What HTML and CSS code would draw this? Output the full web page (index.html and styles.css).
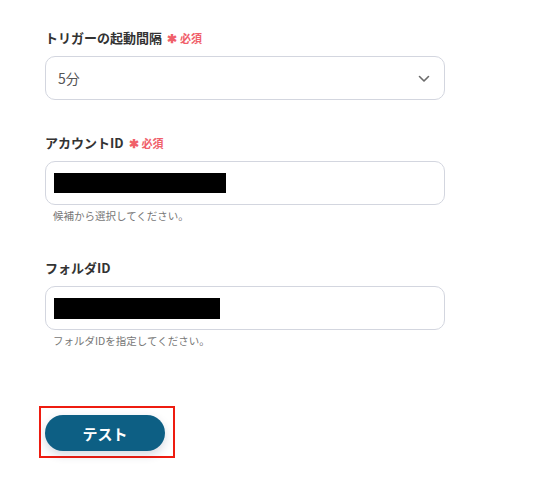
FILE: index.html
```html
<!DOCTYPE html>
<html lang="ja">
<head>
<meta charset="utf-8">
<link rel="stylesheet" href="styles.css">
</head>
<body>
<div class="form">
  <div class="field">
    <div class="label">トリガーの起動間隔<span class="req"><span class="star">✱</span>必須</span></div>
    <div class="input select">
      <span class="value">5分</span>
      <svg class="chev" width="12" height="8" viewBox="0 0 12 8"><path d="M1.5 1.5 L6 6 L10.5 1.5" fill="none" stroke="#6b6b6b" stroke-width="1.6" stroke-linecap="round" stroke-linejoin="round"/></svg>
    </div>
  </div>
  <div class="field">
    <div class="label">アカウントID<span class="req"><span class="star">✱</span>必須</span></div>
    <div class="input"><span class="redact r1"></span></div>
    <div class="help">候補から選択してください。</div>
  </div>
  <div class="field last">
    <div class="label">フォルダID</div>
    <div class="input"><span class="redact r2"></span></div>
    <div class="help">フォルダIDを指定してください。</div>
  </div>
  <div class="highlight">
    <button class="btn">テスト</button>
  </div>
</div>
</body>
</html>
```
FILE: styles.css
```css
html, body {
  margin: 0;
  padding: 0;
  background: #ffffff;
}
body {
  font-family: "Noto Sans CJK JP", "Noto Sans", sans-serif;
  width: 533px;
  height: 482px;
  overflow: hidden;
}
.form {
  padding: 28px 0 0 45px;
  width: 400px;
}
.field {
  margin-bottom: 33px;
}
.field + .field {
  margin-bottom: 34px;
}
.field.last {
  margin-bottom: 57px;
}
.label {
  font-size: 13px;
  line-height: 20px;
  font-weight: 700;
  color: #333333;
  display: flex;
  align-items: center;
  margin-bottom: 8px;
}
.req {
  color: #f0606a;
  font-size: 11px;
  font-weight: 700;
  margin-left: 5px;
  display: flex;
  align-items: center;
}
.star {
  font-size: 12px;
  margin-right: 3px;
}
.input {
  box-sizing: border-box;
  height: 44px;
  border: 1px solid #d3d6df;
  border-radius: 10px;
  display: flex;
  align-items: center;
  padding: 0 8px;
  background: #fff;
}
.select {
  justify-content: space-between;
  padding: 0 14px 0 12px;
}
.value {
  font-size: 14px;
  color: #555555;
}
.chev {
  display: block;
  margin-top: 1px;
}
.redact {
  display: block;
  background: #000000;
  height: 20px;
}
.r1 { width: 172px; height: 20px; }
.r2 { width: 166px; height: 21px; }
.help {
  font-size: 10.5px;
  line-height: 16px;
  color: #777777;
  margin-top: 3px;
  padding-left: 8px;
}
.highlight {
  display: inline-block;
  margin-left: -6px;
  border: 2px solid #ee1c10;
  padding: 7px 8px 5px 4px;
}
.btn {
  display: block;
  width: 120px;
  height: 36px;
  border: none;
  border-radius: 18px;
  background: #0d5f84;
  color: #ffffff;
  font-family: "Noto Sans CJK JP", sans-serif;
  font-size: 15px;
  font-weight: 700;
  box-shadow: 0 4px 10px rgba(30, 50, 90, 0.18);
  padding: 0;
}
```
